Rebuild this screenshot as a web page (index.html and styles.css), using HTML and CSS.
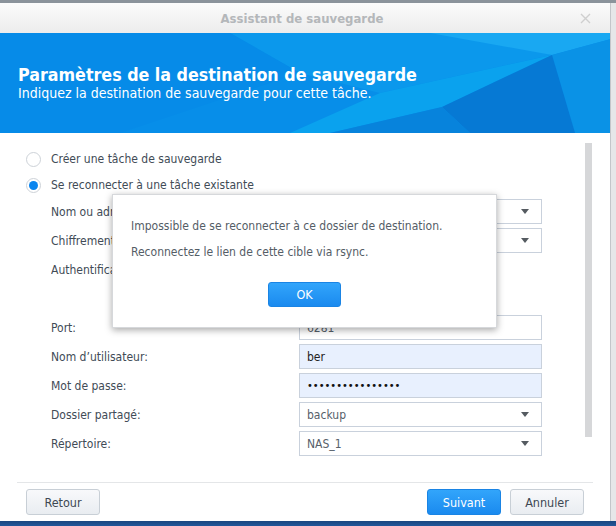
FILE: index.html
```html
<!DOCTYPE html>
<html lang="fr">
<head>
<meta charset="utf-8">
<title>Assistant de sauvegarde</title>
<link rel="stylesheet" href="styles.css">
</head>
<body>
<div class="screen">
  <div class="top-strip"></div>
  <div class="window">
    <div class="titlebar">
      <span class="title">Assistant de sauvegarde</span>
      <svg class="close" width="11" height="11" viewBox="0 0 11 11"><path d="M1 1 L10 10 M10 1 L1 10" stroke="#cfcfcf" stroke-width="1.4" fill="none"/></svg>
    </div>
    <div class="banner">
      <svg class="banner-art" width="611" height="100" viewBox="0 0 611 100" preserveAspectRatio="none">
        <rect width="611" height="100" fill="#078ee9"/>
        <polygon points="230,0 470,0 552,22 380,60 300,40" fill="#0b98ec"/>
        <polygon points="430,0 611,0 611,6 552,22" fill="#19a8f2"/>
        <polygon points="552,22 611,6 611,100 575,100" fill="#0a92e6"/>
        <polygon points="380,60 552,22 442,74 330,100 290,100" fill="#0aa2ee"/>
        <polygon points="552,22 575,100 470,100 442,74" fill="#0679d4"/>
        <polygon points="330,100 442,74 470,100" fill="#0783dc"/>
        <polygon points="0,0 230,0 300,40 120,100 0,100" fill="#068be8"/>
      </svg>
      <div class="banner-text">
        <div class="banner-title">Paramètres de la destination de sauvegarde</div>
        <div class="banner-sub">Indiquez la destination de sauvegarde pour cette tâche.</div>
      </div>
    </div>
    <div class="content">
      <div class="form">
        <div class="radio-row"><span class="radio"></span><span>Créer une tâche de sauvegarde</span></div>
        <div class="radio-row"><span class="radio checked"></span><span>Se reconnecter à une tâche existante</span></div>
        <div class="fields">
          <div class="field"><span class="label">Nom ou adresse IP du serveur:</span><div class="box select"><span></span><i class="arrow"></i></div></div>
          <div class="field"><span class="label">Chiffrement de la transmission:</span><div class="box select"><span></span><i class="arrow"></i></div></div>
          <div class="field"><span class="label">Authentification:</span><div class="blank"></div></div>
          <div class="field"><span class="label"></span><div class="blank"></div></div>
          <div class="field"><span class="label">Port:</span><div class="box"><span>6281</span></div></div>
          <div class="field"><span class="label">Nom d’utilisateur:</span><div class="box filled"><span class="dark">ber</span></div></div>
          <div class="field"><span class="label">Mot de passe:</span><div class="box filled"><span class="dots">••••••••••••••••</span></div></div>
          <div class="field"><span class="label">Dossier partagé:</span><div class="box select"><span>backup</span><i class="arrow"></i></div></div>
          <div class="field"><span class="label">Répertoire:</span><div class="box select"><span>NAS_1</span><i class="arrow"></i></div></div>
        </div>
        <div class="radio-row clipped"><span class="radio"></span><span></span></div>
      </div>
      <div class="scrollbar"><div class="thumb"></div></div>
    </div>
    <div class="footer">
      <button class="btn">Retour</button>
      <div class="footer-right">
        <button class="btn primary">Suivant</button>
        <button class="btn">Annuler</button>
      </div>
    </div>
  </div>
  <div class="bottom-strip"></div>

  <div class="dialog">
    <p>Impossible de se reconnecter à ce dossier de destination.</p>
    <p>Reconnectez le lien de cette cible via rsync.</p>
    <div class="dialog-actions"><button class="btn primary ok">OK</button></div>
  </div>
</div>
</body>
</html>
```
FILE: styles.css
```css
* { box-sizing: border-box; }
html, body { margin: 0; padding: 0; }
body {
  width: 616px;
  height: 526px;
  overflow: hidden;
  background: #e6e7e9;
  font-family: "DejaVu Sans Condensed", "DejaVu Sans", sans-serif;
  font-size: 12px;
  color: #414b56;
}
.screen {
  position: relative;
  width: 616px;
  height: 526px;
  display: flex;
  flex-direction: column;
}
.top-strip { height: 3px; background: #8b939b; flex: none; }
.bottom-strip { height: 5px; background: linear-gradient(#1a467f, #22579a); flex: none; }
.window {
  width: 611px;
  height: 518px;
  background: #fff;
  border-right: 1px solid #c3c6ca;
  display: flex;
  flex-direction: column;
  flex: none;
}
.titlebar {
  height: 30px;
  flex: none;
  background: linear-gradient(#fbfbfb, #ececec);
  display: flex;
  align-items: center;
  justify-content: center;
  position: relative;
}
.title {
  font-weight: bold;
  font-size: 13px;
  color: #b4b7ba;
  margin-left: -6px;
}
.close { position: absolute; right: 19px; top: 10px; }
.banner {
  height: 100px;
  flex: none;
  position: relative;
  overflow: hidden;
  color: #fff;
  display: flex;
  align-items: center;
}
.banner-art { position: absolute; left: 0; top: 0; }
.banner-text { position: relative; padding: 0 0 0 18px; }
.banner-title { font-weight: bold; font-size: 17.7px; line-height: 21px; }
.banner-sub { font-size: 14px; line-height: 16px; margin-top: -1px; }

.content {
  height: 339px;
  flex: none;
  display: flex;
  overflow: hidden;
}
.form { flex: 1; padding: 13px 0 0 26px; }
.radio-row {
  height: 26px;
  display: flex;
  align-items: center;
  gap: 10px;
}
.radio {
  width: 15px;
  height: 15px;
  border-radius: 50%;
  border: 1px solid #cdd2d8;
  background: #fff;
  display: flex;
  align-items: center;
  justify-content: center;
  flex: none;
}
.radio.checked::after {
  content: "";
  width: 9px;
  height: 9px;
  border-radius: 50%;
  background: #0a85ef;
}
.clipped { margin-top: 10px; }
.clipped .radio { border-color: #e3e6ea; }
.fields {
  padding: 1px 0 0 25px;
  display: flex;
  flex-direction: column;
  gap: 4px;
}
.field { display: flex; align-items: center; height: 25px; }
.label { width: 248px; flex: none; white-space: nowrap; overflow: hidden; }
.box, .blank { width: 243px; height: 25px; flex: none; }
.box {
  border: 1px solid #c9d1dc;
  display: flex;
  align-items: center;
  padding: 0 12px 0 7px;
  color: #56606a;
}
.box span { flex: 1; }
.box.filled { background: #e8f0fe; }
.box .dark { color: #222; }
.dots { color: #111; font-size: 11px; letter-spacing: 0; }
.arrow {
  width: 0; height: 0;
  border-left: 4px solid transparent;
  border-right: 4px solid transparent;
  border-top: 5px solid #555b61;
}
.scrollbar { width: 7px; margin: 10px 18px 0 0; flex: none; }
.thumb { height: 294px; background: #d6d7d9; }

.footer {
  flex: 1;
  margin: 10px 17px 0;
  border-top: 1px solid #e4e6e8;
  padding: 6px 9px 0;
  display: flex;
  justify-content: space-between;
  align-items: flex-start;
}
.footer-right { display: flex; gap: 9px; }
.btn {
  width: 74px;
  height: 26px;
  border: 1px solid #c8cfd6;
  border-radius: 3px;
  background: linear-gradient(#f8f9fb, #e9edf1);
  font-family: inherit;
  font-size: 12.5px;
  color: #3d4852;
  padding: 0;
}
.btn.primary {
  background: linear-gradient(#32a5fb, #1a8aef);
  border-color: #1a84e4;
  color: #fff;
}

.dialog {
  position: absolute;
  left: 112px;
  top: 194px;
  width: 385px;
  height: 134px;
  background: #fff;
  border: 1px solid #d6d8db;
  box-shadow: 0 2px 7px rgba(0, 0, 0, 0.35);
  padding: 24px 18px 0;
  color: #545d66;
}
.dialog p { margin: 0 0 11px; line-height: 15px; }
.dialog-actions { display: flex; justify-content: center; margin-top: 22px; }
.btn.ok { width: 73px; height: 25px; font-size: 12.5px; }
```
